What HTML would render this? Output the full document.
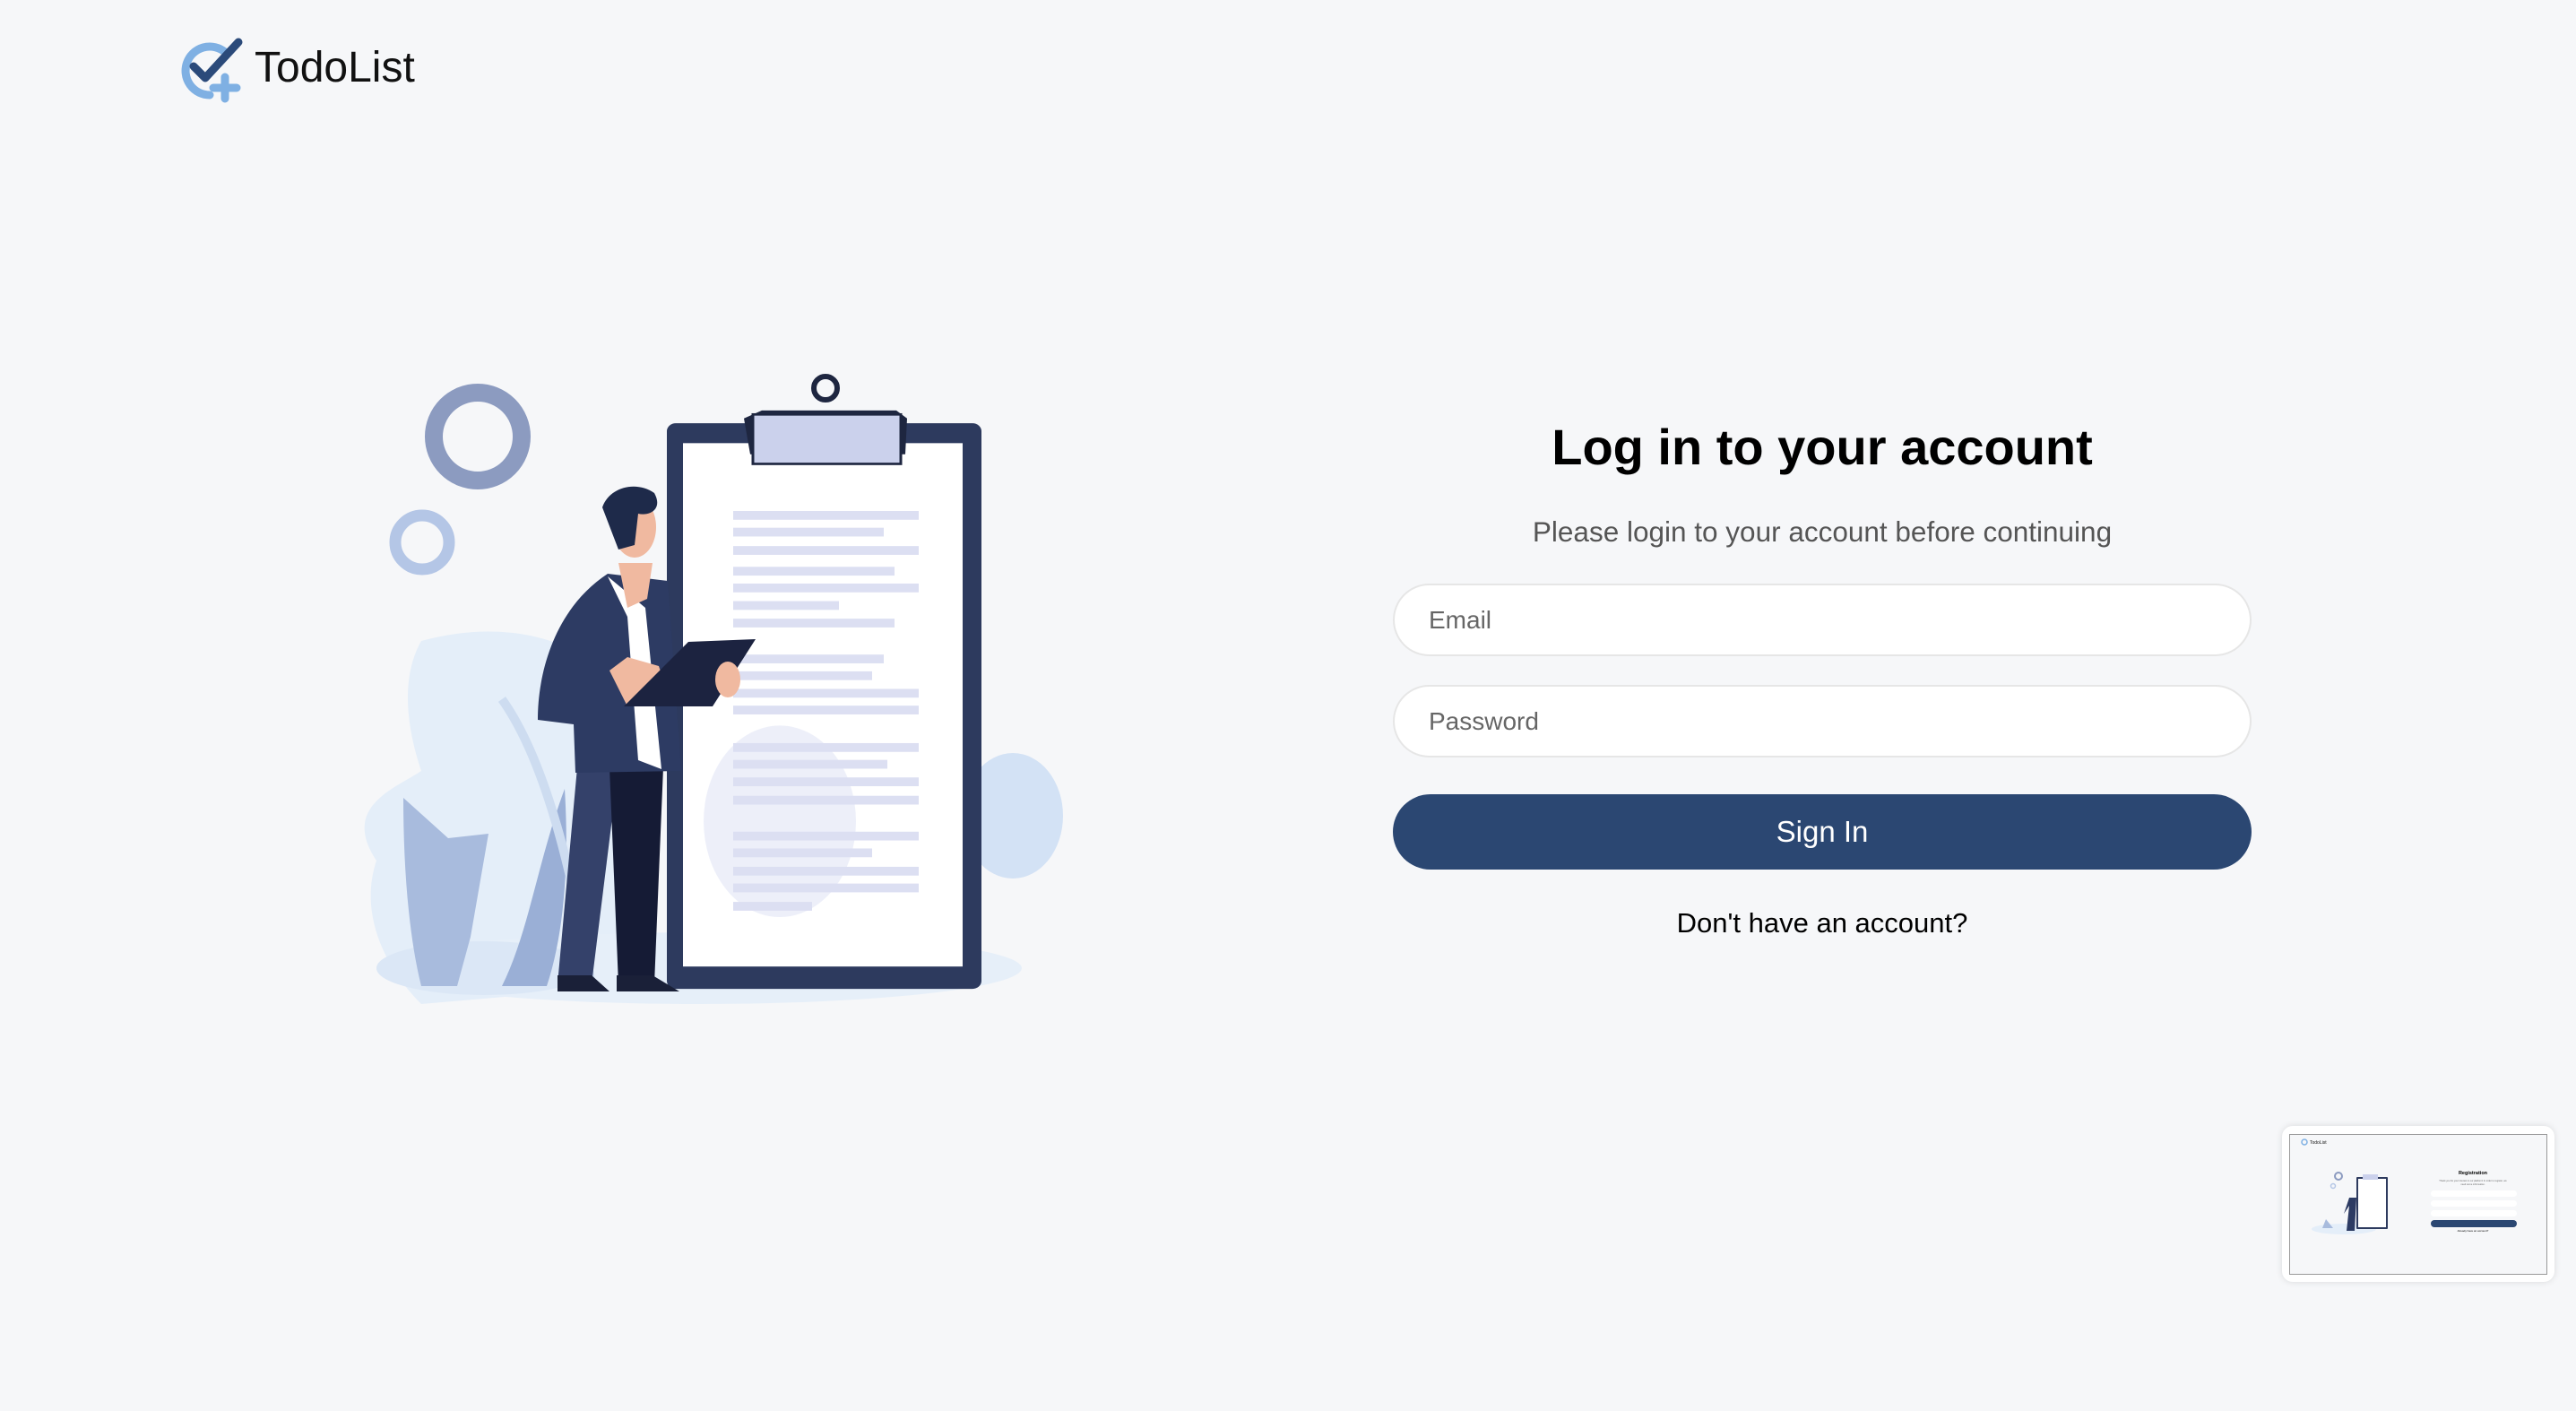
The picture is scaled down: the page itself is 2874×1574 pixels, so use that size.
<!DOCTYPE html>
<html><head><meta charset="utf-8"><style>
*{margin:0;padding:0;box-sizing:border-box}
html,body{width:2874px;height:1574px;background:#f6f7f9;font-family:"Liberation Sans",Arial,sans-serif;overflow:hidden;position:relative}
.abs{position:absolute}
.logo-text{left:284px;top:48px;font-size:48px;color:#111}
.title{left:1554px;width:958px;top:466px;text-align:center;font-size:56px;font-weight:bold;color:#000}
.sub{left:1554px;width:958px;top:575px;text-align:center;font-size:31.5px;color:#555}
.inp{left:1554px;width:958px;height:81px;border:2px solid #e6e6e6;border-radius:41px;background:#fff;font-size:28px;color:#666;padding-left:38px;line-height:77px}
.btn{left:1554px;width:958px;top:886px;height:84px;border-radius:42px;background:#2b4772;color:#fff;font-size:33px;text-align:center;line-height:84px}
.dont{left:1554px;width:958px;top:1012px;text-align:center;font-size:31px;color:#000}
.card{left:2546px;top:1256px;width:304px;height:174px;background:#fff;border-radius:12px;box-shadow:0 0 8px rgba(0,0,0,.12)}
.inner{left:8px;top:9px;width:288px;height:157px;border:1px solid #999;background:#f6f7f9;overflow:hidden}
</style></head><body>
<svg class="abs" style="left:0;top:0" width="2874" height="1574" viewBox="0 0 2874 1574">
 <!-- logo -->
 <path d="M251 58 A27 27 0 1 0 234 106" fill="none" stroke="#7fb0e3" stroke-width="9" stroke-linecap="round"/>
 <path d="M216 74 L229 87 L266 47" fill="none" stroke="#2b4a7a" stroke-width="9" stroke-linecap="round" stroke-linejoin="round"/>
 <path d="M251 86 V110 M238 98 H264" stroke="#7fb0e3" stroke-width="9" stroke-linecap="round"/>
 <!-- blobs -->
 <path d="M470 715 C560 690 650 710 690 770 C720 870 720 1000 700 1100 L470 1120 C430 1080 400 1020 420 960 C380 900 440 880 470 860 C450 800 450 750 470 715Z" fill="#e4eef9"/>
 <ellipse cx="1130" cy="910" rx="56" ry="70" fill="#d3e2f5"/>
 <ellipse cx="780" cy="1080" rx="360" ry="40" fill="#e6eff9"/>
 <ellipse cx="540" cy="1080" rx="120" ry="30" fill="#dbe7f6"/>
 <path d="M450 890 L500 935 L545 930 L525 1045 L510 1100 L470 1100 C455 1040 450 960 450 890Z" fill="#a8bbdd"/>
 <path d="M630 880 C600 960 590 1040 560 1100 L610 1100 C630 1040 635 960 630 880Z" fill="#9aafd6"/>
 <path d="M560 780 C610 850 640 980 660 1100" fill="none" stroke="#cddcf0" stroke-width="10"/>
 <g transform="translate(0,400) scale(1,0.89) translate(0,-400)">
 <!-- clipboard -->
 <rect x="744" y="481" width="351" height="709" rx="10" fill="#2d3a5e"/>
 <rect x="762" y="506" width="312" height="656" fill="#fff"/>
 <ellipse cx="870" cy="980" rx="85" ry="120" fill="#e8ebf7" opacity=".8"/>
 <g fill="#dcdff2">
  <rect x="818" y="591" width="207" height="11"/><rect x="818" y="612" width="168" height="11"/><rect x="818" y="635" width="207" height="11"/>
  <rect x="818" y="661" width="180" height="11"/><rect x="818" y="682" width="207" height="11"/><rect x="818" y="704" width="118" height="11"/>
  <rect x="818" y="726" width="180" height="11"/><rect x="818" y="771" width="168" height="11"/><rect x="818" y="792" width="155" height="11"/>
  <rect x="818" y="814" width="207" height="11"/><rect x="818" y="835" width="207" height="11"/><rect x="818" y="882" width="207" height="11"/>
  <rect x="818" y="903" width="172" height="11"/><rect x="818" y="925" width="207" height="11"/><rect x="818" y="948" width="207" height="11"/>
  <rect x="818" y="993" width="207" height="11"/><rect x="818" y="1014" width="155" height="11"/><rect x="818" y="1037" width="207" height="11"/>
  <rect x="818" y="1058" width="207" height="11"/><rect x="818" y="1081" width="88" height="11"/>
 </g>
 <path d="M830 475 L850 465 L1000 465 L1012 475 L1010 520 L837 520Z" fill="#1e2640"/>
 <rect x="840" y="470" width="165" height="62" fill="#cbd1ec" stroke="#1e2640" stroke-width="3"/>
 </g>
 <!-- person -->
 <g transform="translate(0,-12)">
 <path d="M644 868 L690 868 L660 1110 L622 1110Z" fill="#34416a"/>
 <path d="M680 868 L740 868 L730 1110 L690 1110Z" fill="#151b35"/>
 <path d="M622 1100 L660 1100 L680 1118 L622 1118Z M688 1100 L728 1100 L758 1118 L688 1118Z" fill="#1a2038"/>
 <path d="M678 652 L745 660 L760 872 L642 874 L640 820 L600 815 C600 760 620 690 678 652Z" fill="#2d3b63"/>
 <path d="M678 655 L720 690 L738 870 L712 860 L700 700Z" fill="#fff"/>
 <path d="M690 640 L728 640 L722 680 L700 690Z" fill="#f0b9a0"/>
 <ellipse cx="708" cy="600" rx="24" ry="34" fill="#f0b9a0"/>
 <path d="M672 578 C680 555 710 548 730 562 C740 580 725 588 712 585 L708 620 L690 625 Z" fill="#1e2a4a"/>
 <path d="M680 760 L700 745 L735 755 L745 785 L700 800Z" fill="#f0b9a0"/>
 <path d="M768 728 L843 725 L795 800 L696 800Z" fill="#1c2340"/>
 <ellipse cx="812" cy="770" rx="14" ry="20" fill="#f0b9a0"/>
 </g>
 <circle cx="921" cy="433" r="13" fill="none" stroke="#1e2640" stroke-width="6"/>
 <!-- rings -->
 <circle cx="533" cy="487" r="49" fill="none" stroke="#8c9bc0" stroke-width="20"/>
 <circle cx="471" cy="605" r="30" fill="none" stroke="#b4c6e6" stroke-width="13"/>
</svg>
<div class="abs logo-text">TodoList</div>
<div class="abs title">Log in to your account</div>
<div class="abs sub">Please login to your account before continuing</div>
<div class="abs inp" style="top:651px">Email</div>
<div class="abs inp" style="top:764px">Password</div>
<div class="abs btn">Sign In</div>
<div class="abs dont">Don't have an account?</div>
<div class="abs card"><div class="abs inner">
 <svg width="288" height="157" viewBox="0 0 288 157">
  <circle cx="16" cy="8" r="3" fill="none" stroke="#7fb0e3" stroke-width="1.5"/>
  <text x="22" y="10" font-size="5" fill="#111" font-family="Liberation Sans">TodoList</text>
  <ellipse cx="60" cy="105" rx="36" ry="6" fill="#e4eef9"/>
  <circle cx="54" cy="46" r="4" fill="none" stroke="#8c9bc0" stroke-width="2"/>
  <circle cx="48" cy="57" r="2.5" fill="none" stroke="#b4c6e6" stroke-width="1.5"/>
  <rect x="74" y="47" width="35" height="58" rx="1" fill="#2d3a5e"/>
  <rect x="76" y="49" width="31" height="54" fill="#fff"/>
  <rect x="81" y="44" width="17" height="6" fill="#cbd1ec"/>
  <path d="M63 107 L66 79 L60 88 L66 70 L74 70 L72 107Z" fill="#2d3b63"/>
  <path d="M36 104 L40 94 L48 104Z" fill="#a8bbdd"/>
  <text x="204" y="44" font-size="5.5" font-weight="bold" text-anchor="middle" font-family="Liberation Sans">Registration</text>
  <text x="204" y="52" font-size="2.6" fill="#666" text-anchor="middle" font-family="Liberation Sans">Thank you for your interest in our platform! In order to register, we</text>
  <text x="204" y="56" font-size="2.6" fill="#666" text-anchor="middle" font-family="Liberation Sans">need some information.</text>
  <rect x="157" y="62" width="96" height="7" rx="3.5" fill="#fff"/>
  <rect x="157" y="73" width="96" height="7" rx="3.5" fill="#fff"/>
  <rect x="157" y="84" width="96" height="7" rx="3.5" fill="#fff"/>
  <rect x="157" y="95" width="96" height="8" rx="4" fill="#2b4772"/>
  <text x="204" y="108" font-size="3" text-anchor="middle" font-family="Liberation Sans">Already have an account?</text>
 </svg>
</div></div>
</body></html>
